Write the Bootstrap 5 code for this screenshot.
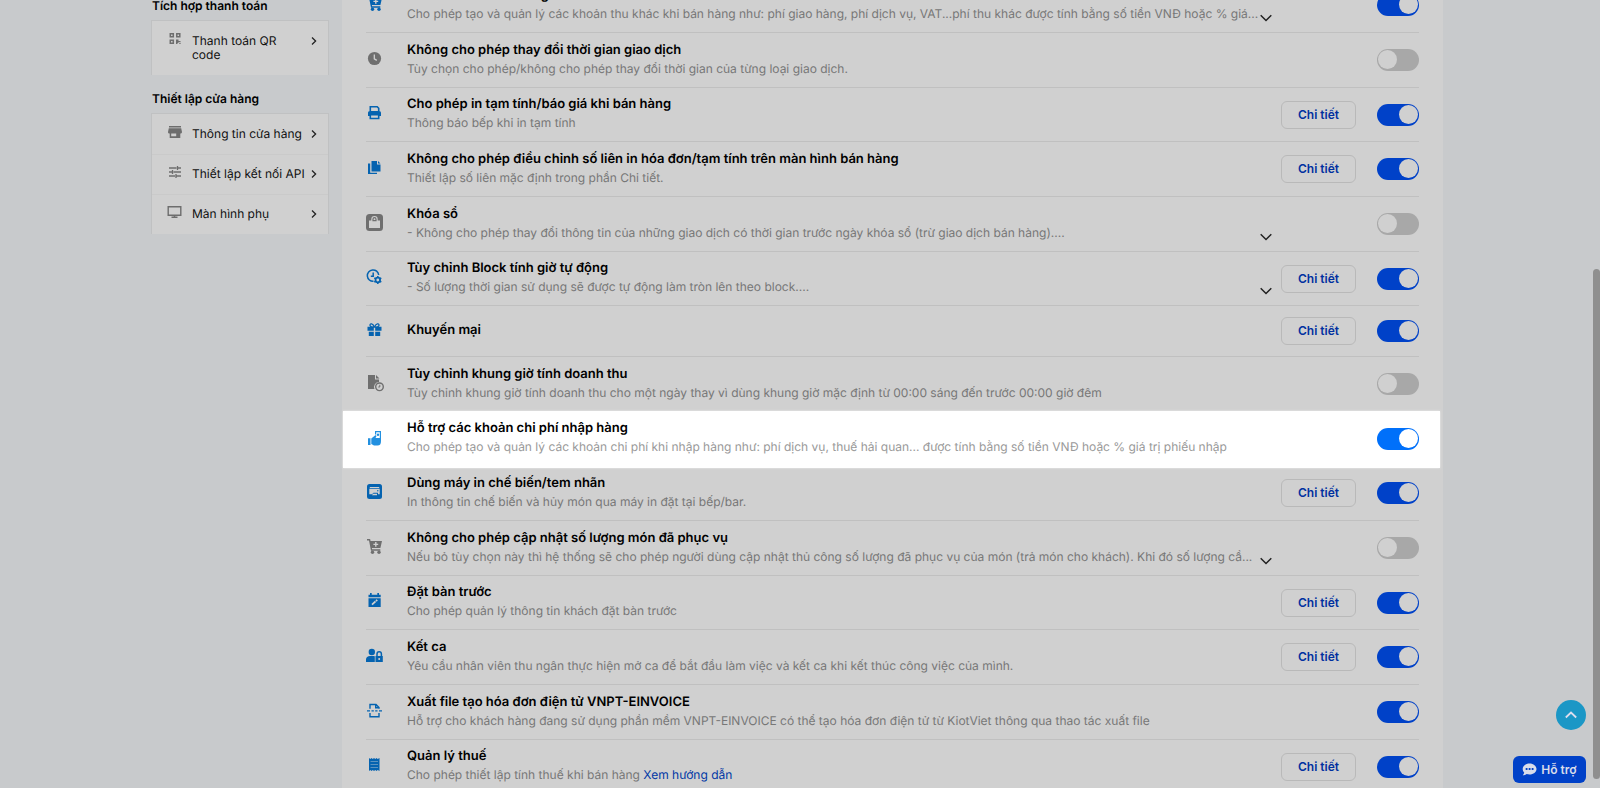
<!DOCTYPE html>
<html lang="vi">
<head>
<meta charset="utf-8">
<meta name="viewport" content="width=device-width, initial-scale=1">
<title>Thiết lập giao dịch</title>
<link href="https://cdn.jsdelivr.net/npm/bootstrap@5.3.0/dist/css/bootstrap.min.css" rel="stylesheet">
<style>
:root{--page:#c8cacc;--panel:#d0d0d0;--line:#c0c0c0;--blue:#0041c8;--icon:#0563b0;--muted:#777}
body{font-family:Inter,"Noto Sans",sans-serif;font-size:12px;line-height:14px;text-rendering:geometricPrecision;color:#000;background:var(--page);height:100vh;overflow:hidden;padding-right:6px}
.page-wrap{max-width:1292px}
.side{width:178px;margin-top:-18px}
.side h2{font-size:12px;line-height:14px;font-weight:600;margin:17px 1px 7px}
.side-list{border:1px solid #c0c1c2;border-bottom:0;background:var(--panel)}
.side-list a{color:#111;padding:13px 11px 13px 15px}
.side-list a+a{border-top:1px solid #cacaca;padding-top:12px}
.side-list .ico{width:16px;height:16px;color:#6d6d6d;margin-top:-3px;margin-right:9px;flex-shrink:0}
.side-list .name{flex:1;white-space:nowrap}
.side-list .wrap-name{white-space:normal;padding-right:30px}
.side-list .go{width:6px;height:10px;margin-top:2px;flex-shrink:0}
.panel{background:var(--panel);padding:0 24px;margin:-22px 0 0 13px;min-width:0}
.setting{height:55px;border-bottom:1px solid var(--line);position:relative}
.setting:nth-child(3n){height:54px}
.setting.slim{height:51px}
.setting .ico{width:17px;height:17px;color:var(--icon);margin-right:24px;margin-bottom:4px;overflow:visible}
.setting.off .ico{color:#6f6f6f}
.setting .words{min-width:0;padding-bottom:2px;max-width:853px}
.setting h3{font-size:13px;line-height:19px;font-weight:600;margin:0}
.setting p{font-size:12px;line-height:18px;margin:0;color:var(--muted)}
.setting p a{color:#0037a5;text-decoration:none}
.more{width:12px;height:20px;margin-top:25px;padding:0;border:0;background:none;line-height:0;color:#222}
.detail{width:75px;height:28px;padding:0;margin-right:21px;border:1px solid #b9b9b9;border-radius:6px;font-size:12px;line-height:18px;font-weight:600;color:#0030a0;flex-shrink:0}
.toggle.form-switch{min-height:0;padding:0;margin:0;line-height:0;flex-shrink:0}
.toggle .form-check-input{float:none;margin:0;width:42px;height:22px;border:0;background-color:#a8a8a8;background-image:none;position:relative;box-shadow:none}
.toggle .form-check-input::after{content:"";position:absolute;width:19px;height:19px;border-radius:50%;background:var(--panel);left:1px;top:1px}
.toggle .form-check-input:checked{background-color:var(--blue);background-image:none}
.toggle .form-check-input:checked::after{left:auto;right:1px}
.focus{border-color:#eee;z-index:1}
.focus::before{content:"";position:absolute;z-index:-1;inset:-1px -21px -3px -23px;background:#fff;box-shadow:0 0 2px #eee}
.setting.focus .ico{color:#2290e0;margin-bottom:0}
.focus p{color:#999}
.focus .toggle .form-check-input:checked{background-color:#0070fa}
.focus .toggle .form-check-input::after{background:#fff}
.floaters{right:14px;bottom:5px;z-index:5;gap:26px}
.to-top{width:30px;height:30px;border:0;border-radius:50%;background:#1b97c6;color:#dde;padding:0;line-height:0}
.help{height:27px;width:73px;border:0;border-radius:6px;background:var(--blue);color:#d8dcea;font-size:12px;line-height:20px;font-weight:600;padding:0}
.thumb{right:0;top:269px;bottom:9px;width:7px;border-radius:4px;background:#8f8f8f}
</style>
</head>
<body>
<svg class="d-none" aria-hidden="true">
 <symbol id="cart" viewBox="0 0 17 17"><path fill="currentColor" d="M1 1h2.600c.4 0 .6.2.7.6L4.500 3H16l-1.600 7H5.900l.2 1.300h8.200v1.400H5L3 2.500H1z"/><circle cx="6.500" cy="14.300" r="1.700" fill="currentColor"/><circle cx="13" cy="14.300" r="1.700" fill="currentColor"/><path stroke="#d0d0d0" stroke-width="1.400" d="M9.800 4v4.800M7.400 6.400h4.800"/></symbol>
 <symbol id="down" viewBox="0 0 12 12"><path fill="none" stroke="currentColor" stroke-width="1.500" d="M.7 3.200 6 8.500l5.300-5.300"/></symbol>
 <symbol id="next" viewBox="0 0 6 10"><path fill="none" stroke="#222" stroke-width="1.300" d="m1 1.500 3.600 3.500L1 8.500"/></symbol>
</svg>
<div class="page-wrap mx-auto d-flex align-items-start">
<aside class="side flex-shrink-0">
 <h2>Tích hợp thanh toán</h2>
 <nav class="side-list">
  <a href="#" class="d-flex text-decoration-none"><svg class="ico" viewBox="0 0 16 16"><path fill="none" stroke="currentColor" stroke-width="1.500" d="M3.300 2.800h3v3h-3zM9.800 2.800h3v3h-3zM3.300 9.300h3v3h-3z"/><path fill="currentColor" d="M9 8.500h2.500V10h2V8.500V11h-2v1h-1v1H9zM12.300 11.800h1.300v1.300h-1.300z"/></svg><span class="name wrap-name">Thanh toán QR code</span><svg class="go"><use href="#next"/></svg></a>
 </nav>
 <h2>Thiết lập cửa hàng</h2>
 <nav class="side-list">
  <a href="#" class="d-flex text-decoration-none"><svg class="ico" viewBox="0 0 16 16"><path fill="currentColor" fill-rule="evenodd" d="M2 2h12v1.500H2zM1.800 4.300h12.400L15 8c0 1-1 1.500-1.700 1.500V14H2.700V9.500C1.800 9.500 1 9 1 8zM4.200 9.500v2.800h5V9.500z"/></svg><span class="name">Thông tin cửa hàng</span><svg class="go"><use href="#next"/></svg></a>
  <a href="#" class="d-flex text-decoration-none"><svg class="ico" viewBox="0 0 16 16"><path fill="none" stroke="currentColor" stroke-width="1.300" d="M2 4h7.500M11 4h3M2 8h3M6.500 8H14M2 12h6M9.500 12H14M10.500 2v4M5.500 6v4M9 10v4"/></svg><span class="name">Thiết lập kết nối API</span><svg class="go"><use href="#next"/></svg></a>
  <a href="#" class="d-flex text-decoration-none"><svg class="ico" viewBox="0 0 16 16"><path fill="none" stroke="currentColor" stroke-width="1.400" d="M1.200 2.700h12.600v8.600H1.200zM7.500 11.300v2.400M4.500 13.300h6"/></svg><span class="name">Màn hình phụ</span><svg class="go"><use href="#next"/></svg></a>
 </nav>
</aside>
<main class="panel flex-grow-1">
 <section class="setting d-flex align-items-center">
  <svg class="ico flex-shrink-0"><use href="#cart"/></svg>
  <div class="words flex-grow-1"><h3>Thu khác khi bán hàng</h3><p class="text-truncate">Cho phép tạo và quản lý các khoản thu khác khi bán hàng như: phí giao hàng, phí dịch vụ, VAT...phí thu khác được tính bằng số tiền VNĐ hoặc % giá...</p></div>
  <button class="more" aria-label="Xem thêm"><svg width="12" height="12"><use href="#down"/></svg></button>
  <div class="toggle form-check form-switch ms-auto"><input class="form-check-input" type="checkbox" role="switch" aria-label="Thu khác khi bán hàng" checked></div>
 </section>
 <section class="setting off d-flex align-items-center">
  <svg class="ico flex-shrink-0" viewBox="0 0 17 17"><circle cx="8.500" cy="8.500" r="6.600" fill="currentColor"/><path fill="none" stroke="#d0d0d0" stroke-width="1.300" d="M8.300 4.500v4.400l2.500 1.500"/></svg>
  <div class="words flex-grow-1"><h3>Không cho phép thay đổi thời gian giao dịch</h3><p>Tùy chọn cho phép/không cho phép thay đổi thời gian của từng loại giao dịch.</p></div>
  <div class="toggle form-check form-switch ms-auto"><input class="form-check-input" type="checkbox" role="switch" aria-label="Không cho phép thay đổi thời gian giao dịch"></div>
 </section>
 <section class="setting d-flex align-items-center">
  <svg class="ico flex-shrink-0" viewBox="0 0 17 17"><path fill="none" stroke="currentColor" stroke-width="1.600" d="M4.300 7V2.800h6.900l1.500 1.500V7M4.300 10.600h8.400v3.900H4.300z"/><path fill="currentColor" d="M4 7h9c1.300 0 2 .8 2 2v3h-2.300v-2H4.300v2H2V9c0-1.200.7-2 2-2z"/></svg>
  <div class="words flex-grow-1"><h3>Cho phép in tạm tính/báo giá khi bán hàng</h3><p>Thông báo bếp khi in tạm tính</p></div>
  <button class="btn detail ms-auto">Chi tiết</button>
  <div class="toggle form-check form-switch"><input class="form-check-input" type="checkbox" role="switch" aria-label="Cho phép in tạm tính" checked></div>
 </section>
 <section class="setting d-flex align-items-center">
  <svg class="ico flex-shrink-0" viewBox="0 0 17 17"><path fill="currentColor" d="M5.500 2H11v3.500h3.500v7h-9zM12 2l2.500 2.500H12zM2 4.500h2.200v9.300H11V15H2z"/></svg>
  <div class="words flex-grow-1"><h3>Không cho phép điều chỉnh số liên in hóa đơn/tạm tính trên màn hình bán hàng</h3><p>Thiết lập số liên mặc định trong phần Chi tiết.</p></div>
  <button class="btn detail ms-auto">Chi tiết</button>
  <div class="toggle form-check form-switch"><input class="form-check-input" type="checkbox" role="switch" aria-label="Không cho phép điều chỉnh số liên in" checked></div>
 </section>
 <section class="setting off d-flex align-items-center">
  <svg class="ico flex-shrink-0" viewBox="0 0 17 17"><rect width="17" height="17" rx="3.500" fill="currentColor"/><path fill="#d0d0d0" d="M3 6.500h2.300V5.300a3.200 3.200 0 0 1 6.400 0v1.200H14V14H3z"/><path fill="none" stroke="currentColor" stroke-width="1.200" d="M7 6.600V5.200a1.500 1.500 0 0 1 3 0v1.400z"/></svg>
  <div class="words flex-grow-1"><h3>Khóa sổ</h3><p class="text-truncate">- Không cho phép thay đổi thông tin của những giao dịch có thời gian trước ngày khóa sổ (trừ giao dịch bán hàng)....</p></div>
  <button class="more" aria-label="Xem thêm"><svg width="12" height="12"><use href="#down"/></svg></button>
  <div class="toggle form-check form-switch ms-auto"><input class="form-check-input" type="checkbox" role="switch" aria-label="Khóa sổ"></div>
 </section>
 <section class="setting d-flex align-items-center">
  <svg class="ico flex-shrink-0" viewBox="0 0 17 17"><path fill="none" stroke="currentColor" stroke-width="1.500" d="M7.500 13.300A5.700 5.700 0 1 1 12.700 7M7.200 4.500v3.700H4.800"/><circle cx="11.800" cy="12" r="2.300" fill="none" stroke="currentColor" stroke-width="1.800"/><path fill="none" stroke="currentColor" stroke-width="1.500" d="M11.800 8v1.500M11.800 14.500V16M8.300 10l1.300.7M14 13.300l1.300.7M8.300 14l1.300-.7M14 10.700l1.300-.7"/></svg>
  <div class="words flex-grow-1"><h3>Tùy chỉnh Block tính giờ tự động</h3><p class="text-truncate">- Số lượng thời gian sử dụng sẽ được tự động làm tròn lên theo block....</p></div>
  <button class="more" aria-label="Xem thêm"><svg width="12" height="12"><use href="#down"/></svg></button>
  <button class="btn detail ms-auto">Chi tiết</button>
  <div class="toggle form-check form-switch"><input class="form-check-input" type="checkbox" role="switch" aria-label="Tùy chỉnh Block" checked></div>
 </section>
 <section class="setting slim d-flex align-items-center">
  <svg class="ico flex-shrink-0" viewBox="0 0 17 17"><path fill="none" stroke="currentColor" stroke-width="1.300" d="M8.500 6.500C7 2 4 2.200 4 4.200c0 1.600 2 1.900 4.500 1.900 2.500 0 4.500-.3 4.500-1.900 0-2-3-2.200-4.500 1.900"/><path fill="currentColor" d="M1.500 5.800h6.300v4H1.500zM9.200 5.800h6.300v4H9.200zM2.800 10.800h5V15h-5zM9.200 10.800h5V15h-5z"/></svg>
  <div class="words flex-grow-1"><h3>Khuyến mại</h3></div>
  <button class="btn detail ms-auto">Chi tiết</button>
  <div class="toggle form-check form-switch"><input class="form-check-input" type="checkbox" role="switch" aria-label="Khuyến mại" checked></div>
 </section>
 <section class="setting off d-flex align-items-center">
  <svg class="ico flex-shrink-0" viewBox="0 0 17 17"><path fill="currentColor" d="M2 1h7v4.500h4V8a5 5 0 0 0-4.500 7H2zM10 1l3.500 3.500H10z"/><circle cx="13.500" cy="12.800" r="3.800" fill="none" stroke="currentColor" stroke-width="1.400"/><path fill="none" stroke="currentColor" stroke-width="1" d="M13.800 10.800v2.200h-1.500"/></svg>
  <div class="words flex-grow-1"><h3>Tùy chỉnh khung giờ tính doanh thu</h3><p>Tùy chỉnh khung giờ tính doanh thu cho một ngày thay vì dùng khung giờ mặc định từ 00:00 sáng đến trước 00:00 giờ đêm</p></div>
  <div class="toggle form-check form-switch ms-auto"><input class="form-check-input" type="checkbox" role="switch" aria-label="Tùy chỉnh khung giờ tính doanh thu"></div>
 </section>
 <section class="setting focus d-flex align-items-center">
  <svg class="ico flex-shrink-0" viewBox="0 0 17 17"><path fill="currentColor" d="M2 8.300h2.500V15H2zM5.300 8.600 9 5.600c1-.7 1.800.2 1.200 1.200L9.500 8H15v3c0 3-1 4.500-3.500 4.500H8L5.300 14z"/><path fill="none" stroke="currentColor" stroke-width="1.200" d="M9.600 4.600V1.600h4.800V8"/><circle cx="12" cy="4.700" r="1.200" fill="currentColor"/></svg>
  <div class="words flex-grow-1"><h3>Hỗ trợ các khoản chi phí nhập hàng</h3><p>Cho phép tạo và quản lý các khoản chi phí khi nhập hàng như: phí dịch vụ, thuế hải quan... được tính bằng số tiền VNĐ hoặc % giá trị phiếu nhập</p></div>
  <div class="toggle form-check form-switch ms-auto"><input class="form-check-input" type="checkbox" role="switch" aria-label="Hỗ trợ các khoản chi phí nhập hàng" checked></div>
 </section>
 <section class="setting d-flex align-items-center">
  <svg class="ico flex-shrink-0" viewBox="0 0 17 17"><rect x="1" y="1" width="15" height="15" rx="2.500" fill="currentColor"/><path fill="#d0d0d0" d="M3.800 4h9.400v.9H3.800zM3.300 5.700h10.400v5.500h-1.700V9.800H7.500L6 11.200H3.300zM7 10.700h4v1.600H6z"/><circle cx="11.800" cy="7.700" r=".7" fill="currentColor"/></svg>
  <div class="words flex-grow-1"><h3>Dùng máy in chế biến/tem nhãn</h3><p>In thông tin chế biến và hủy món qua máy in đặt tại bếp/bar.</p></div>
  <button class="btn detail ms-auto">Chi tiết</button>
  <div class="toggle form-check form-switch"><input class="form-check-input" type="checkbox" role="switch" aria-label="Dùng máy in chế biến" checked></div>
 </section>
 <section class="setting off d-flex align-items-center">
  <svg class="ico flex-shrink-0"><use href="#cart"/></svg>
  <div class="words flex-grow-1"><h3>Không cho phép cập nhật số lượng món đã phục vụ</h3><p class="text-truncate">Nếu bỏ tùy chọn này thì hệ thống sẽ cho phép người dùng cập nhật thủ công số lượng đã phục vụ của món (trả món cho khách). Khi đó số lượng cầ...</p></div>
  <button class="more" aria-label="Xem thêm"><svg width="12" height="12"><use href="#down"/></svg></button>
  <div class="toggle form-check form-switch ms-auto"><input class="form-check-input" type="checkbox" role="switch" aria-label="Không cho phép cập nhật số lượng món đã phục vụ"></div>
 </section>
 <section class="setting d-flex align-items-center">
  <svg class="ico flex-shrink-0" viewBox="0 0 17 17"><path fill="currentColor" d="M4 1h1.700v1.700h5.600V1H13v1.700h1.700v2.500H2.500V2.700H4zM2.500 6.200h12.200V15H2.500z"/><path fill="none" stroke="#d0d0d0" stroke-width="1.800" d="m6 12.700 3.500-3.300M10 9l1.200-1.200"/></svg>
  <div class="words flex-grow-1"><h3>Đặt bàn trước</h3><p>Cho phép quản lý thông tin khách đặt bàn trước</p></div>
  <button class="btn detail ms-auto">Chi tiết</button>
  <div class="toggle form-check form-switch"><input class="form-check-input" type="checkbox" role="switch" aria-label="Đặt bàn trước" checked></div>
 </section>
 <section class="setting d-flex align-items-center">
  <svg class="ico flex-shrink-0" viewBox="0 0 17 17"><circle cx="5.800" cy="5" r="3.200" fill="currentColor"/><path fill="currentColor" d="M0 15v-2.500C0 10.300 1.700 9 4 9h3.500c.7 0 1 .2 1.300.4V15zM9.500 9h7.300v6H9.500z"/><path fill="none" stroke="currentColor" stroke-width="1.500" d="M11 9V7a2.200 2.200 0 0 1 4.400 0v2"/><circle cx="13.200" cy="12" r="1" fill="#d0d0d0"/></svg>
  <div class="words flex-grow-1"><h3>Kết ca</h3><p>Yêu cầu nhân viên thu ngân thực hiện mở ca để bắt đầu làm việc và kết ca khi kết thúc công việc của mình.</p></div>
  <button class="btn detail ms-auto">Chi tiết</button>
  <div class="toggle form-check form-switch"><input class="form-check-input" type="checkbox" role="switch" aria-label="Kết ca" checked></div>
 </section>
 <section class="setting d-flex align-items-center">
  <svg class="ico flex-shrink-0" viewBox="0 0 17 17"><path fill="none" stroke="currentColor" stroke-width="1.400" d="M4 6.800V2.500h6l3 3v1.300M9.700 2.500v3.300H13M4 11v3.800h9V11M1 8.900h3M5.500 8.900h2.300M9.200 8.900h2.300M13 8.900h3"/></svg>
  <div class="words flex-grow-1"><h3>Xuất file tạo hóa đơn điện tử VNPT-EINVOICE</h3><p>Hỗ trợ cho khách hàng đang sử dụng phần mềm VNPT-EINVOICE có thể tạo hóa đơn điện tử từ KiotViet thông qua thao tác xuất file</p></div>
  <div class="toggle form-check form-switch ms-auto"><input class="form-check-input" type="checkbox" role="switch" aria-label="Xuất file tạo hóa đơn điện tử" checked></div>
 </section>
 <section class="setting d-flex align-items-center">
  <svg class="ico flex-shrink-0" viewBox="0 0 17 17"><path fill="currentColor" d="m3 2 1.300 1L5.500 2l1.300 1L8 2l1.300 1 1.200-1 1.200 1L13.500 2v13l-1.800-1-1.200 1-1.200-1L8 15l-1.200-1-1.300 1-1.200-1L3 15z"/><path stroke="#5b93c0" d="M4.500 5.500H12M4.500 8.500H12M4.500 11.500H12"/></svg>
  <div class="words flex-grow-1"><h3>Quản lý thuế</h3><p>Cho phép thiết lập tính thuế khi bán hàng <a href="#">Xem hướng dẫn</a></p></div>
  <button class="btn detail ms-auto">Chi tiết</button>
  <div class="toggle form-check form-switch"><input class="form-check-input" type="checkbox" role="switch" aria-label="Quản lý thuế" checked></div>
 </section>
</main>
</div>
<div class="floaters position-fixed d-flex flex-column align-items-end">
 <button class="to-top" aria-label="Lên đầu trang"><svg width="14" height="14" viewBox="0 0 14 14"><path fill="none" stroke="currentColor" stroke-width="1.800" d="m1.800 9.500 5.200-5 5.200 5"/></svg></button>
 <button class="help d-flex align-items-center justify-content-center gap-1"><svg width="15" height="15" viewBox="0 0 15 15"><path fill="currentColor" d="M7.500 1.500C11.500 1.500 14.500 4 14.500 7s-3 5.500-7 5.500c-1 0-2-.2-2.800-.5-1 .8-2.500 1.300-4 1.300.8-.8 1.400-1.800 1.500-2.700C1.200 9.700.7 8.400.7 7c0-3 2.800-5.500 6.800-5.500z"/><path stroke="#0041c8" stroke-width="1.800" d="M3.700 7h1.800M6.700 7h1.800M9.700 7h1.800"/></svg>Hỗ trợ</button>
</div>
<div class="thumb position-fixed"></div>
<script src="https://cdn.jsdelivr.net/npm/bootstrap@5.3.0/dist/js/bootstrap.bundle.min.js"></script>
</body>
</html>
